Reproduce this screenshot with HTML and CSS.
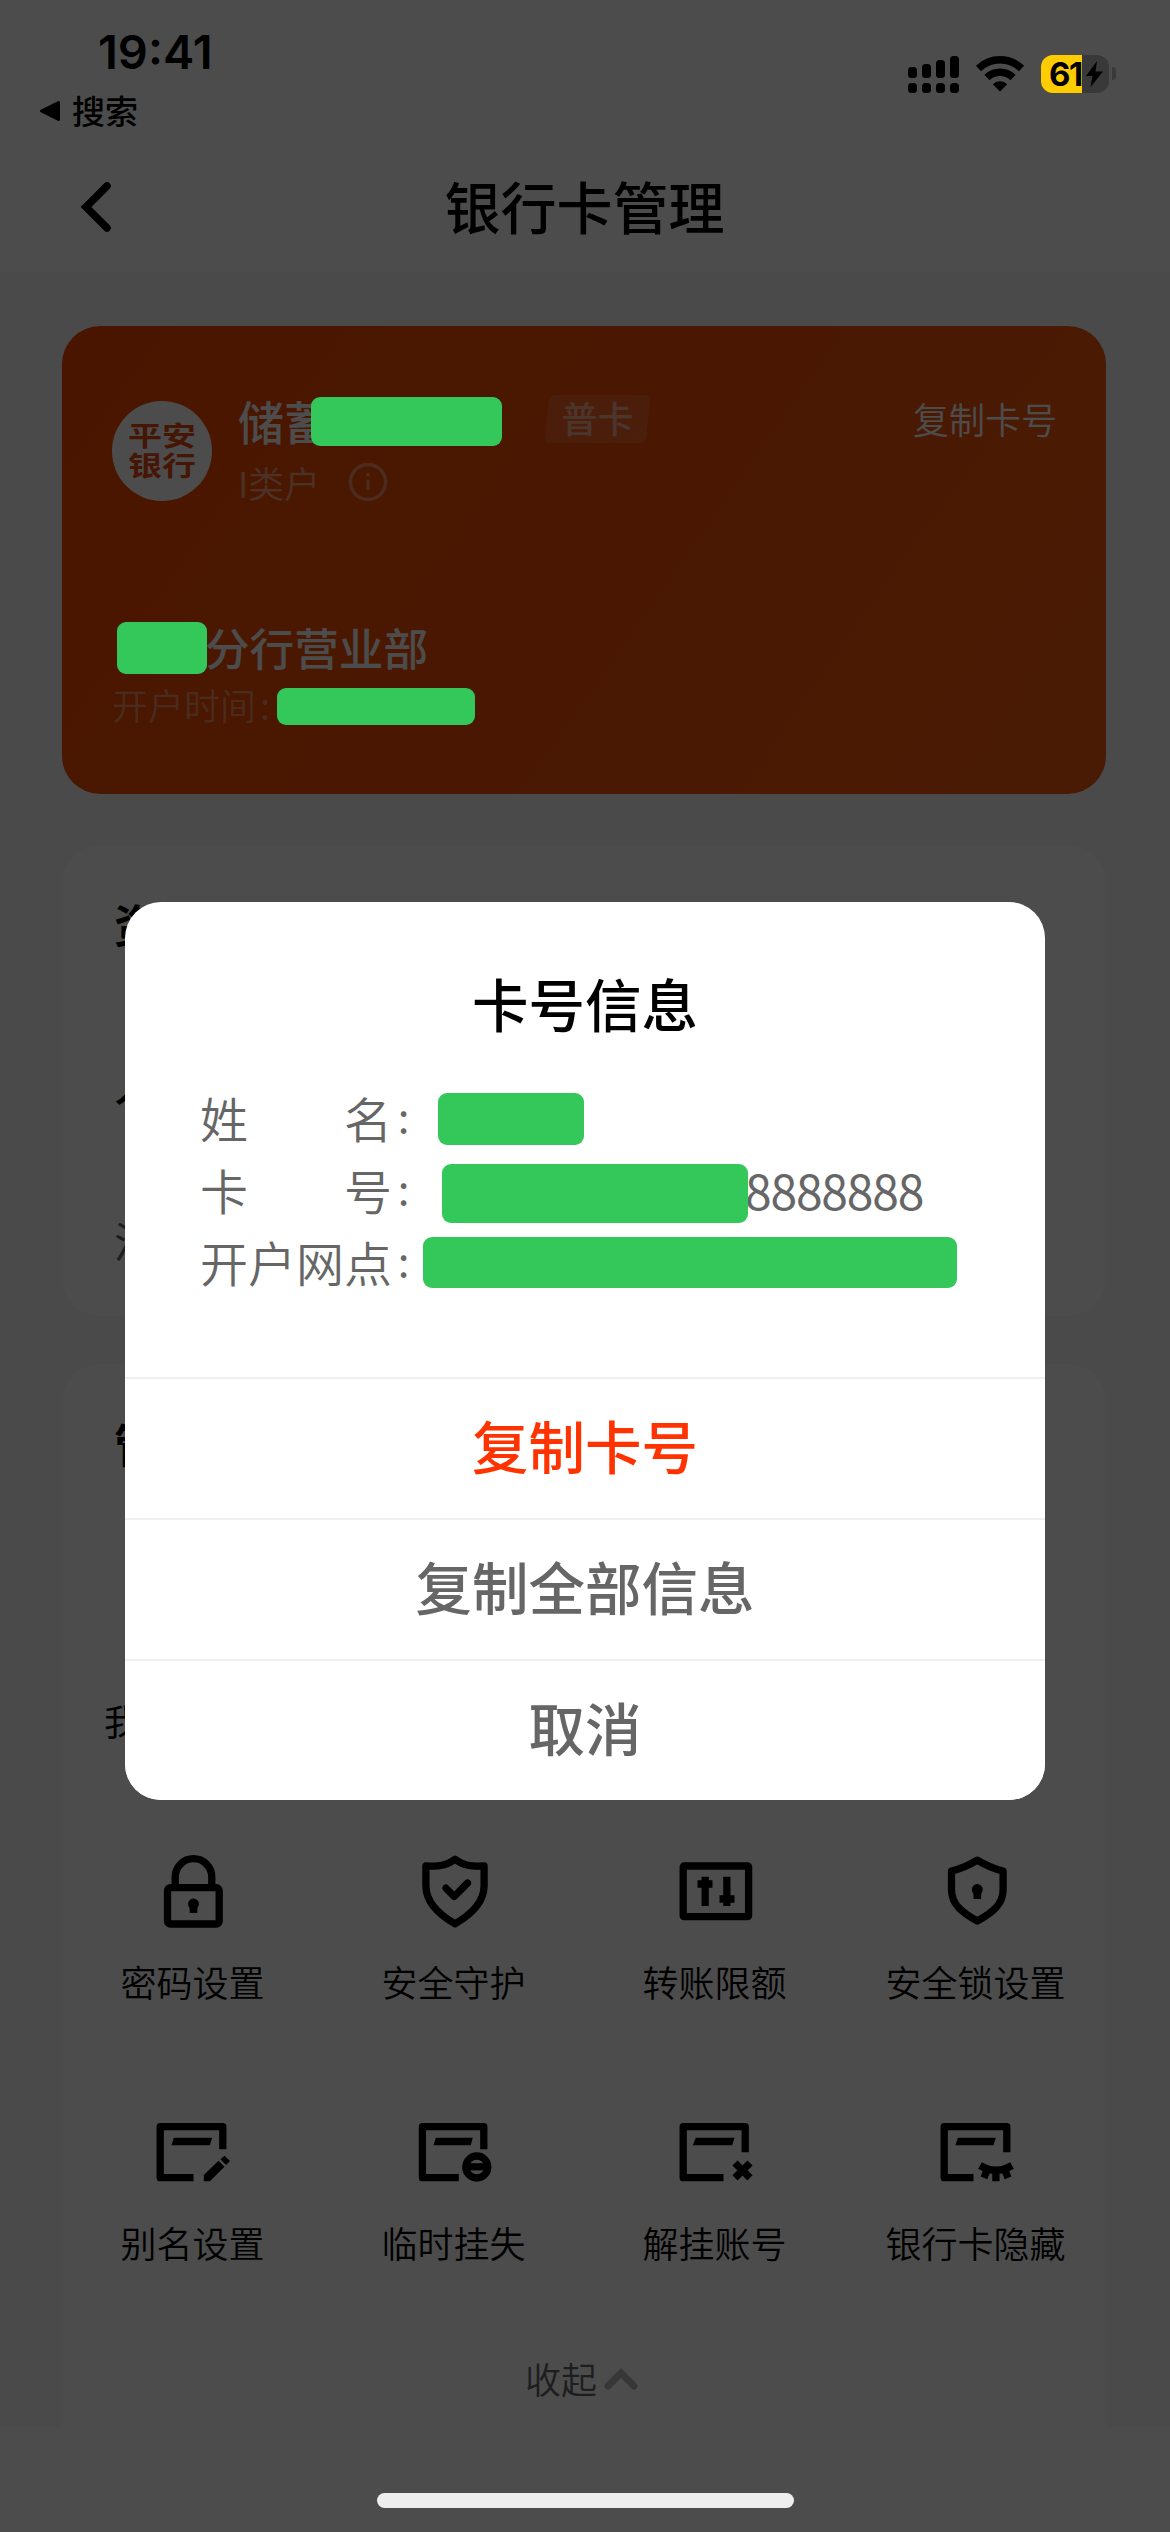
FILE: index.html
```html
<!DOCTYPE html>
<html lang="zh-CN">
<head>
<meta charset="utf-8">
<title>银行卡管理</title>
<link rel="stylesheet" href="styles.css">
</head>
<body>
<div class="screen">
  <header class="top">
    <div class="status">
      <div class="status-left">
        <div class="time">19:41</div>
        <div class="back-app">
          <svg width="22" height="22" viewBox="0 0 22 22"><path d="M2.500 11 19.500 2.500V19.500Z" stroke="#000" stroke-width="3" stroke-linejoin="round"/></svg>
          <span>搜索</span>
        </div>
      </div>
      <div class="status-right">
        <svg class="signal" width="52" height="38" viewBox="0 0 52 38">
          <rect x="0" y="12" width="9" height="11" rx="3.500"/><rect x="14" y="9" width="9" height="14" rx="3.500"/><rect x="28" y="5" width="9" height="18" rx="3.500"/><rect x="42" y="1" width="9" height="22" rx="3.500"/>
          <rect x="0" y="28" width="9" height="10" rx="3.500"/><rect x="14" y="28" width="9" height="10" rx="3.500"/><rect x="28" y="28" width="9" height="10" rx="3.500"/><rect x="42" y="28" width="9" height="10" rx="3.500"/>
        </svg>
        <svg class="wifi" width="50" height="38" viewBox="0 0 50 38">
          <path d="M3.500 13.500A31 31 0 0 1 46.500 13.500M12 22.500A19 19 0 0 1 38 22.500" fill="none" stroke="#000" stroke-width="7.500"/>
          <path d="M25 36.500 17.800 29.200A10.500 10.500 0 0 1 32.200 29.200Z"/>
        </svg>
        <div class="battery"><span>61</span>
          <svg width="18" height="26" viewBox="0 0 18 26"><path d="M12 0 1 15h6.500L5.500 26 18 10.500H10.500Z"/></svg>
        </div>
        <i class="nub"></i>
      </div>
    </div>
    <nav class="nav">
      <svg width="34" height="52" viewBox="0 0 34 52"><path d="M28 5 7 26 28 47" fill="none" stroke="#000" stroke-width="7.500" stroke-linecap="round"/></svg>
      <h1>银行卡管理</h1>
    </nav>
  </header>

  <main class="content">
    <section class="bank-card">
      <div class="card-head">
        <div class="logo"><div class="logo-text"><span>平安</span><span>银行</span></div></div>
        <div class="account">
          <div class="account-name">储蓄<i class="mask mask-name"></i></div>
          <div class="account-type"><span>I类户</span>
            <svg width="40" height="40" viewBox="0 0 40 40" fill="none" stroke="#fff" stroke-width="3.500"><circle cx="20" cy="20" r="17.500"/><path d="M20 17.500V28M20 11v3.500"/></svg>
          </div>
        </div>
        <div class="tag"><span>普卡</span></div>
        <div class="copy">复制卡号</div>
      </div>
      <div class="branch"><i class="mask mask-city"></i>分行营业部</div>
      <div class="opened">开户时间<b>:</b><i class="mask mask-date"></i></div>
    </section>

    <section class="panel assets">
      <h2>资</h2>
      <div class="currency">人</div>
      <div class="demand">活</div>
    </section>

    <section class="panel manage">
      <h2>管</h2>
      <div class="first-row">我</div>
      <div class="grid">
        <div class="item">
          <svg class="ico" viewBox="0 0 96 96"><path class="ln" d="M30.200 43V34a18.300 18.300 0 0 1 36.600 0V43"/><rect class="ln" x="22.500" y="44.700" width="51.700" height="36.300" rx="3"/><path d="M43 61a5.500 5.500 0 1 1 9.500 3.800L52.200 70H44.800L44.500 64.800A5.500 5.500 0 0 1 43 61Z"/></svg>
          <span>密码设置</span>
        </div>
        <div class="item">
          <svg class="ico" viewBox="0 0 96 96"><path class="ln" d="M49 16.300C40 22 36 23.500 19.900 23V43C20 58 32 71 49 80.800 66 71 78 58 78.100 43V23C62 23.500 58 22 49 16.300Z"/><path class="ln" stroke-linecap="round" d="M40 45.200 48.200 53.500 61.500 40.200"/></svg>
          <span>安全守护</span>
        </div>
        <div class="item">
          <svg class="ico" viewBox="0 0 96 96"><rect class="ln" x="16.200" y="23" width="65.400" height="50.700" rx="1"/><path d="M34.500 33.700h7.300v3.600h3.700v7.400h-3.700V63h-7.300V44.700h-4v-7.400h4ZM56.200 33.700h7.300v18.600h4v7.400h-4V63h-7.300v-3.300h-3.700v-7.400h3.700Z"/></svg>
          <span>转账限额</span>
        </div>
        <div class="item">
          <svg class="ico" viewBox="0 0 96 96"><path class="ln" d="M49.300 17.200C57 22 66 26 75.100 28V47C75 61 65 69.500 49.300 78 33.600 69.500 23.600 61 23.500 47V28C32.600 26 41.600 22 49.300 17.200Z"/><path d="M43.800 46.500a5.500 5.500 0 1 1 9.500 3.800L53 56H45.600L45.300 50.300A5.500 5.500 0 0 1 43.800 46.500Z"/></svg>
          <span>安全锁设置</span>
        </div>
        <div class="item">
          <svg class="ico" viewBox="0 0 96 96"><path class="ln" d="M48.500 73.700H15.200V22.700H77.800V45.300"/><path d="M28.800 33.700H67.200L64.800 41.300H26.500ZM58.800 77.300V71L73.500 56.700 79.500 62.700 64.800 77.300ZM75.500 55.200 79.500 51.700 85 56.900 81 61Z"/></svg>
          <span>别名设置</span>
        </div>
        <div class="item">
          <svg class="ico" viewBox="0 0 96 96"><path class="ln" d="M52.800 73.700H16.400V22.700H77.800V45.300"/><path d="M29.800 33.700H66.800L64.800 41.300H27.500Z"/><circle class="ln" cx="70.800" cy="63" r="11"/><path d="M60 59.200h21.600v7.200H60Z"/></svg>
          <span>临时挂失</span>
        </div>
        <div class="item">
          <svg class="ico" viewBox="0 0 96 96"><path class="ln" d="M56.500 73.700H16.200V22.700H78.200V48.300"/><path d="M28.800 33.700H67.500L65.200 41.300H25.800Z"/><path class="ln" d="M68 59 83 73.800M83 59 68 73.800"/></svg>
          <span>解挂账号</span>
        </div>
        <div class="item">
          <svg class="ico" viewBox="0 0 96 96"><path class="ln" d="M45.500 73.700H16.200V22.700H78.800V48.300"/><path d="M29.800 33.700H67.800L65.500 41.300H27.500Z"/><path class="ln" d="M52 61.500Q67.800 71 84 61.500M67.900 66V77.300M59.500 65 56 73.800M76.500 65 80 73.800"/></svg>
          <span>银行卡隐藏</span>
        </div>
      </div>
      <div class="collapse"><span>收起</span>
        <svg width="34" height="24" viewBox="0 0 34 24"><path d="M4 20 17 7 30 20" fill="none" stroke="#b8b8b8" stroke-width="7" stroke-linecap="round"/></svg>
      </div>
    </section>
  </main>
  <footer class="safe"></footer>
</div>

<div class="scrim">
  <div class="dialog">
    <h3>卡号信息</h3>
    <dl class="info">
      <div><dt><span>姓</span><span>名</span></dt><b>:</b><dd><i class="block block-name"></i></dd></div>
      <div><dt><span>卡</span><span>号</span></dt><b>:</b><dd><i class="block block-number"></i><span class="digits">8888888</span></dd></div>
      <div><dt>开户网点</dt><b>:</b><dd><i class="block block-branch"></i></dd></div>
    </dl>
    <button class="action primary">复制卡号</button>
    <button class="action">复制全部信息</button>
    <button class="action">取消</button>
  </div>
</div>
<div class="home-bar"></div>
</body>
</html>
```
FILE: styles.css
```css
* { box-sizing: border-box; margin: 0; padding: 0; }
body {
  width: 1170px; height: 2532px; overflow: hidden; position: relative;
  font-family: "Noto Sans CJK SC", sans-serif; color: #000; background: #fff;
}
i, b { font-style: normal; }
svg { display: block; flex: none; }
.screen { height: 2532px; display: flex; flex-direction: column; }

/* status bar and title */
.top { height: 272px; background: #fff; }
.status { height: 144px; display: flex; justify-content: space-between; position: relative; z-index: 3; }
.time { font: 600 47px/56px Inter, sans-serif; padding: 24px 0 0 98px; }
.back-app { display: flex; align-items: center; gap: 11px; padding-left: 39px; height: 61px; font-size: 33px; line-height: 60px; font-weight: 500; }
.back-app span { margin-top: -2px; }
.status-right { display: flex; align-items: flex-start; padding: 55px 54px 0 0; }
.wifi { margin-left: 15px; }
.battery {
  margin-left: 16px; width: 68px; height: 38px; border-radius: 12px; display: flex; align-items: center;
  padding-left: 8px; background: linear-gradient(90deg, #ffcc00 41px, #393939 41px);
  font: 700 33px/38px Inter, sans-serif; letter-spacing: -1.500px;
}
.battery span { width: 36px; }
.nub { width: 4px; height: 13px; margin: 12px 0 0 3px; border-radius: 0 4px 4px 0; background: #393939; }
.nav { height: 128px; display: grid; grid-template-columns: 34px 1fr 34px; padding: 0 76px 0 79px; }
.nav svg { margin-top: 37px; }
.nav h1 { text-align: center; font-size: 56px; line-height: 80px; font-weight: 500; padding-top: 21px; margin-left: -4px; }

.content { flex: 1; background: #f7f7f7; padding: 54px 64px 0 62px; display: flex; flex-direction: column; }
.safe { height: 105px; background: #fff; }

/* bank card */
.bank-card {
  height: 468px; border-radius: 38px; padding: 64px 49px 0 50px; color: #fff;
  background: linear-gradient(125deg, #f84800, #f85c10);
}
.card-head { display: flex; align-items: flex-start; height: 224px; }
.logo {
  width: 100px; height: 100px; margin-top: 11px; border-radius: 50%; background: #fff; color: #e84a10;
  display: flex; justify-content: center; align-items: center;
}
.logo-text {
  display: flex; flex-direction: column; transform: scaleY(.8); margin-top: -3px;
  font-size: 34px; line-height: 38px; font-weight: 700;
}
.account { width: 333px; padding-left: 26px; }
.account-name { position: relative; font-size: 46px; line-height: 60px; font-weight: 500; }
.account-type { display: flex; align-items: center; gap: 28px; height: 63px; font-size: 36px; line-height: 62px; font-weight: 350; color: rgba(255, 255, 255, .5); }
.account-type svg { opacity: .4; }
.tag { position: relative; width: 105px; height: 48px; margin-top: 5px; font-size: 36px; line-height: 44px; font-weight: 500; text-align: center; color: rgba(255, 255, 255, .5); }
.tag span { position: relative; }
.tag::before { content: ""; position: absolute; inset: 0 2px; border-radius: 6px; background: rgba(255, 255, 255, .13); transform: skewX(-6deg); }
.copy { margin-left: auto; font-size: 36px; line-height: 56px; font-weight: 350; }
.branch { position: relative; padding-left: 93px; font-size: 44.600px; line-height: 66px; font-weight: 500; }
.opened { position: relative; font-size: 36px; line-height: 48px; font-weight: 350; color: rgba(255, 255, 255, .4); }
.opened b { padding-left: 4px; font-weight: 400; }
.mask, .block { background: #34c759; border-radius: 9px; }
.mask { position: absolute; z-index: 3; }
.mask-name { left: 73px; top: 7px; width: 191px; height: 49px; }
.mask-city { left: 5px; top: 8px; width: 90px; height: 52px; }
.mask-date { left: 165px; top: 8px; width: 198px; height: 37px; }

/* panels */
.panel { background: #fff; border-radius: 38px; }
.panel h2 { font-size: 45px; line-height: 60px; font-weight: 700; }
.assets { height: 471px; margin-top: 51px; padding: 49px 52px 0; }
.currency { font-size: 45px; line-height: 60px; font-weight: 500; padding-top: 99px; }
.demand { font-size: 42px; line-height: 60px; color: #666; padding-top: 97px; }
.manage { flex: 1; margin-top: 48px; border-radius: 38px 38px 0 0; }
.manage h2 { padding: 50px 0 0 52px; }
.first-row { font-size: 36px; line-height: 50px; padding: 221px 0 0 42px; }
.grid { display: grid; grid-template-columns: repeat(4, 261px); padding-top: 98px; }
.item { height: 261px; display: flex; flex-direction: column; align-items: center; font-size: 36px; line-height: 50px; font-weight: 350; }
.item span { margin-top: 17px; }
.ico { width: 96px; height: 96px; }
.ln { fill: none; stroke: #000; stroke-width: 7.300px; stroke-linejoin: round; }
.collapse { display: flex; justify-content: center; align-items: center; gap: 7px; color: #666; font-size: 36px; line-height: 50px; font-weight: 350; margin-top: -12px; padding-right: 5px; }

/* dialog */
.scrim { position: absolute; inset: 0; z-index: 2; background: rgba(0, 0, 0, .7); padding-top: 902px; }
.dialog { width: 920px; height: 898px; margin: 0 auto; background: #fff; border-radius: 36px; display: flex; flex-direction: column; overflow: hidden; }
.dialog h3 { font-size: 56.500px; line-height: 80px; font-weight: 500; text-align: center; padding-top: 60px; }
.info { flex: 1; padding: 39px 0 0 75px; color: #666; font-size: 48px; line-height: 72px; }
.info div { display: flex; height: 72px; }
.info dt { width: 192px; display: flex; justify-content: space-between; font-weight: 350; }
.info b { width: 31px; padding-right: 8px; text-align: center; font-size: 42px; line-height: 67px; font-weight: 400; }
.info dd { display: flex; align-items: flex-start; }
.block-name { width: 146px; height: 52px; margin: 12px 0 0 15px; }
.block-number { width: 306px; height: 59px; margin: 11px 0 0 19px; z-index: 1; }
.block-branch { width: 534px; height: 51px; margin-top: 12px; }
.digits { margin-left: -3px; letter-spacing: -1.200px; font-weight: 400; }
.action { height: 141px; border: 0; border-top: 2px solid #efefef; background: #fff; color: #666; font: 500 56.500px/128px "Noto Sans CJK SC", sans-serif; padding-bottom: 10px; }
.primary { color: #ff3300; }

.home-bar { position: absolute; z-index: 4; left: 377px; top: 2493px; width: 417px; height: 15px; border-radius: 8px; background: #eee; }
```
